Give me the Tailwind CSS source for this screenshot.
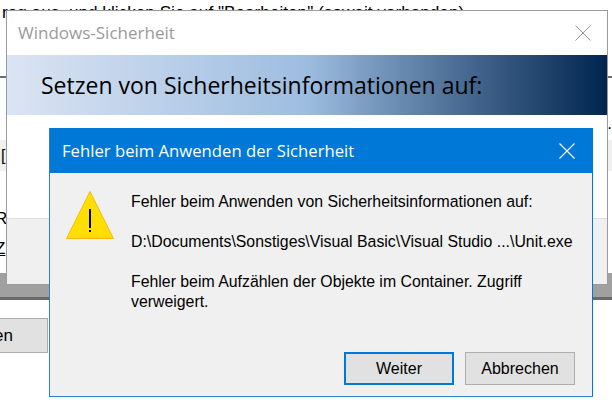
<!DOCTYPE html>
<html lang="de">
<head>
  <meta charset="UTF-8" />
  <title>Windows-Sicherheit</title>
  <script src="https://cdn.jsdelivr.net/npm/@tailwindcss/browser@4"></script>
</head>
<body class="relative w-[612px] h-[411px] overflow-hidden bg-white font-['Liberation_Sans'] text-black">

  <!-- window behind, mostly covered -->
  <p class="absolute left-[2px] top-[2px] whitespace-nowrap text-[17.200px] leading-[20px]">rag aus, und klicken Sie auf "Bearbeiten" (soweit vorhanden).</p>
  <div class="absolute left-0 right-0 top-[76px] h-[2px] bg-[#6d6d6d]"></div>
  <p class="absolute right-0 top-[114px] text-[17px] leading-[20px]">e.</p>
  <div class="absolute left-0 right-0 top-[140px] h-[31px] bg-[#f0f0f0] text-[16px] leading-[31px] pl-[1px]">[D</div>
  <p class="absolute left-[-5px] top-[209px] text-[17px] leading-[20px]">R</p>
  <p class="absolute left-[-5px] top-[239px] text-[17px] leading-[20px] underline">Z</p>
  <div class="absolute left-0 right-0 top-[273px] h-[27px] bg-[#a0a0a0] border-b-[3px] border-[#696969]"></div>
  <div class="absolute left-[-40px] top-[318px] w-[88px] h-[35px] bg-[#e1e1e1] border border-[#adadad] flex items-center justify-end pr-[34px] text-[17px]">en</div>

  <!-- Windows-Sicherheit -->
  <div class="absolute left-[6px] top-[10px] w-[602px] h-[275px] bg-white border border-[#9b9b9b] flex flex-col">
    <div class="h-[44px] flex items-center justify-between pl-[11px] pr-[16px] shrink-0">
      <span class="font-['Open_Sans'] text-[17px] text-[#9a9a9a]">Windows-Sicherheit</span>
      <svg width="16" height="16" viewBox="0 0 16 16" fill="none" stroke="#9a9a9a"><path d="M.5.5l15 15M15.500.5l-15 15"/></svg>
    </div>
    <div class="h-[60px] shrink-0 flex items-center pl-[34px] bg-gradient-to-r from-[#dbe4f3] via-[#9dbde0] to-[#00264f] text-[23px] font-['Open_Sans']">Setzen von Sicherheitsinformationen auf:</div>
    <div class="flex-1"></div>
    <div class="h-[66px] bg-[#f0f0f0] border-t border-[#dfdfdf] shrink-0"></div>
  </div>

  <!-- Fehler beim Anwenden der Sicherheit -->
  <div class="absolute left-[49px] top-[128px] w-[544px] h-[269px] bg-[#f0f0f0] border border-[#0078d7] border-l-[#2f80c5] border-b-[#2f80c5] flex flex-col">
    <div class="h-[44px] bg-[#0078d7] shrink-0 flex items-center justify-between pl-[12px] pr-[17px] text-white">
      <span class="font-['Open_Sans'] text-[16.700px]">Fehler beim Anwenden der Sicherheit</span>
      <svg width="16" height="16" viewBox="0 0 16 16" fill="none" stroke="#fff" stroke-width="1.100"><path d="M.5.5l15 15M15.500.5l-15 15"/></svg>
    </div>
    <div class="flex-1 flex pl-[16px] pt-[18px]">
      <svg class="shrink-0" width="48" height="48" viewBox="0 0 48 48">
        <path d="M24 .5 L47.500 47.500 H.5 Z" fill="#ffdf00" stroke="#fdb813" stroke-linejoin="round"/>
        <rect x="23" y="18" width="2" height="19" fill="#000"/>
        <rect x="23" y="39" width="2" height="2" fill="#000"/>
      </svg>
      <div class="ml-[17px] w-[445px] text-[15.850px] leading-[20px] pt-[1px]">
        <p>Fehler beim Anwenden von Sicherheitsinformationen auf:</p>
        <p class="mt-[20px] whitespace-nowrap">D:\Documents\Sonstiges\Visual Basic\Visual Studio ...\Unit.exe</p>
        <p class="mt-[20px]">Fehler beim Aufzählen der Objekte im Container. Zugriff verweigert.</p>
      </div>
    </div>
    <div class="flex justify-end gap-[11px] pr-[17px] pb-[11px] text-[16px]">
      <button class="w-[110px] h-[33px] bg-[#e1e1e1] border-2 border-[#0078d7]">Weiter</button>
      <button class="w-[110px] h-[33px] bg-[#e1e1e1] border border-[#adadad]">Abbrechen</button>
    </div>
  </div>
</body>
</html>
